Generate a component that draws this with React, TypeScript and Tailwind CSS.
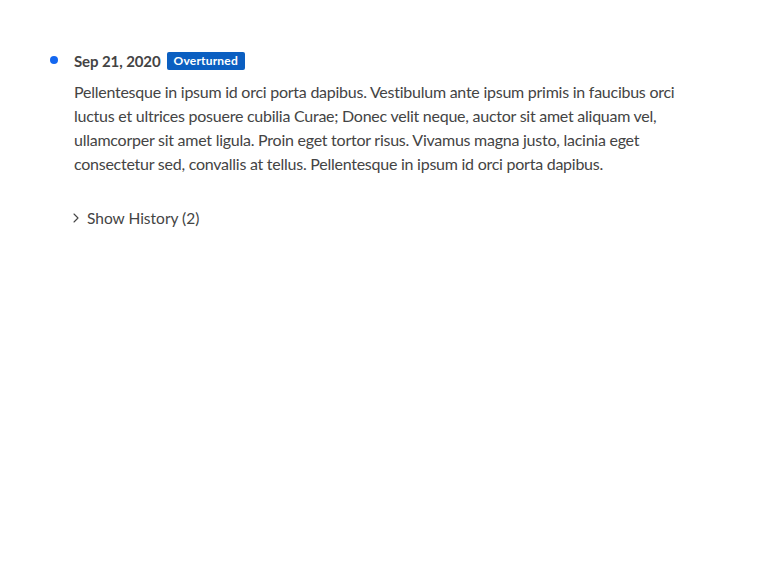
import { ChevronRight } from "lucide-react";

const entry = {
  date: "Sep 21, 2020",
  status: "Overturned",
  body:
    "Pellentesque in ipsum id orci porta dapibus. Vestibulum ante ipsum primis in faucibus orci luctus et ultrices posuere cubilia Curae; Donec velit neque, auctor sit amet aliquam vel, ullamcorper sit amet ligula. Proin eget tortor risus. Vivamus magna justo, lacinia eget consectetur sed, convallis at tellus. Pellentesque in ipsum id orci porta dapibus.",
  historyCount: 2,
};

export default function App() {
  return (
    <div className="min-h-screen bg-white font-['Lato',sans-serif] text-[#3d3d3d]">
      <div className="flex gap-4 px-[50px] pt-[50px]">
        <div className="pt-[6px]">
          <div className="size-2 rounded-full bg-[#1467f0]" />
        </div>
        <div className="flex w-[620px] flex-col">
          <div className="flex items-center gap-[6px]">
            <span className="text-[15px] font-bold tracking-[-0.1px] text-[#444]">{entry.date}</span>
            <span className="rounded-[2px] bg-[#0b5fc1] px-[7px] py-[1px] text-[12px] font-bold leading-4 tracking-[0.2px] text-white">
              {entry.status}
            </span>
          </div>
          <p className="mt-[7px] text-[16px] leading-6 tracking-[-0.25px] text-[#444]">{entry.body}</p>
          <button className="mt-[31px] flex items-center gap-[3px] -ml-[6px] text-[15.5px] text-[#444]">
            <ChevronRight className="size-4" strokeWidth={1.6} />
            Show History ({entry.historyCount})
          </button>
        </div>
      </div>
    </div>
  );
}
